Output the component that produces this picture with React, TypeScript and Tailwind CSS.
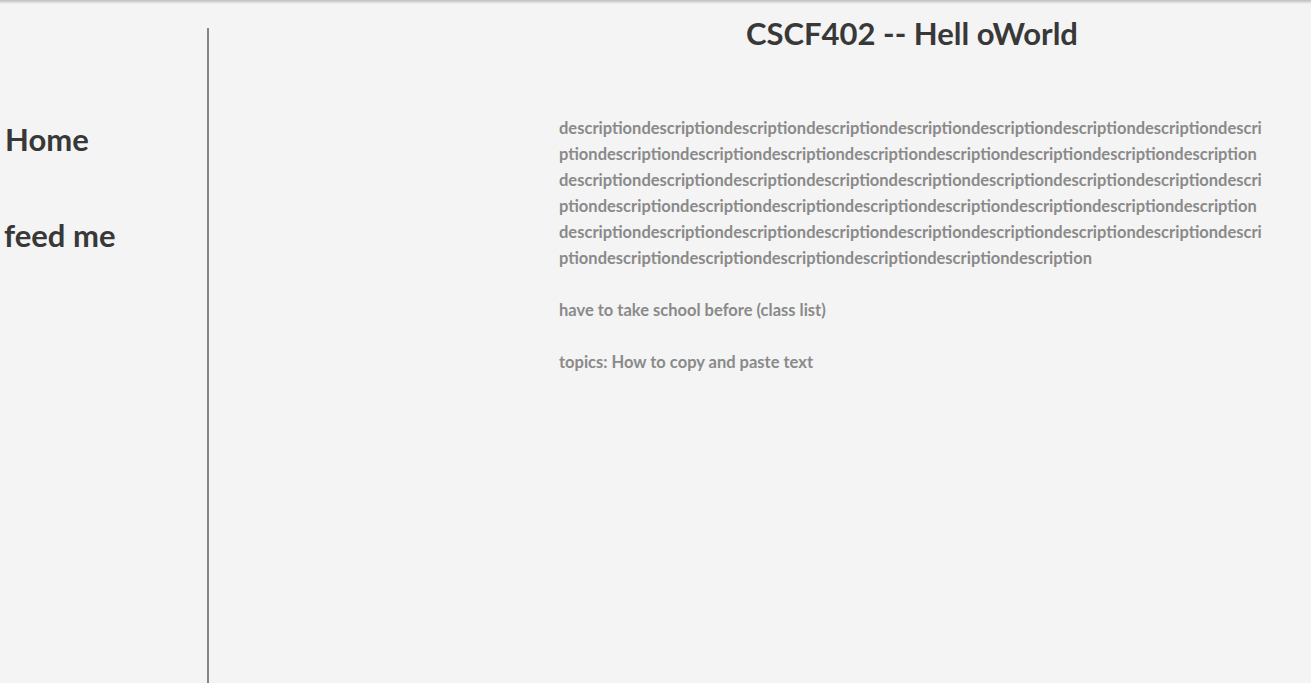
const desc = 'description'.repeat(49)

export default function App() {
  return (
    <div className="relative min-h-[683px] h-[683px] overflow-hidden bg-[#f4f4f4] font-['Lato',sans-serif] font-bold">
      {/* top shade */}
      <div className="absolute inset-x-0 top-0 h-[4px] bg-gradient-to-b from-[#bdbdbd] to-[#f4f4f4]" />

      <div className="flex h-full">
        {/* Sidebar */}
        <nav className="mt-[28px] w-[209px] shrink-0 border-r-2 border-[#858585] text-[31px] leading-[36px] text-[#383838]">
          <div className="mt-[93px] pl-[5px]">Home</div>
          <div className="mt-[60px] pl-[4px]">feed me</div>
        </nav>

        {/* Main */}
        <main className="flex-1 pl-[350px] pr-[46px]">
          <h1 className="mt-[15px] text-center text-[31px] leading-[36px] text-[#383838]">
            CSCF402 -- Hell oWorld
          </h1>
          <div className="mt-[64px] text-[16.5px] leading-[26px] text-[#8a8a8a]">
            <p className="break-all">{desc}</p>
            <p className="mt-[26px]">have to take school before (class list)</p>
            <p className="mt-[26px]">topics: How to copy and paste text</p>
          </div>
        </main>
      </div>
    </div>
  )
}
